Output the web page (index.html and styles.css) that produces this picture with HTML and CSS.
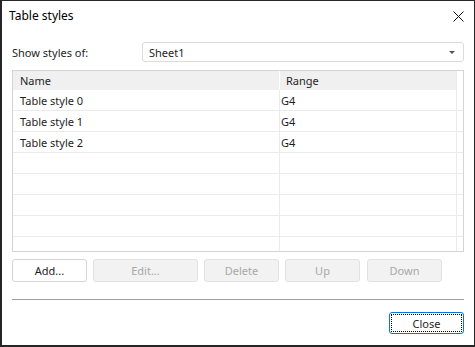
FILE: index.html
```html
<!DOCTYPE html>
<html lang="en">
  <head>
    <meta charset="UTF-8" />
    <title>Table styles</title>
    <link rel="stylesheet" href="styles.css">
  </head>
  <body>
    <div class="dialog">
      <div class="titlebar">
        <span class="title">Table styles</span>
        <svg class="close-x" width="11" height="11" viewBox="0 0 11 11">
          <path d="M0.5 0.5 L10.5 10.5 M10.5 0.5 L0.5 10.5" stroke="#111" stroke-width="1" fill="none" />
        </svg>
      </div>

      <div class="content">
        <div class="show-row">
          <span class="label">Show styles of:</span>
          <div class="combo">
            <span>Sheet1</span>
            <svg width="6" height="3" viewBox="0 0 6 3"><path d="M0 0 H6 L3 3 Z" fill="#555" /></svg>
          </div>
        </div>

        <div class="list">
          <div class="row head">
            <div class="cell name">Name</div>
            <div class="cell range">Range</div>
            <div class="cell rest"></div>
          </div>
          <div class="row">
            <div class="cell name">Table style 0</div>
            <div class="cell range">G4</div>
            <div class="cell rest"></div>
          </div>
          <div class="row">
            <div class="cell name">Table style 1</div>
            <div class="cell range">G4</div>
            <div class="cell rest"></div>
          </div>
          <div class="row">
            <div class="cell name">Table style 2</div>
            <div class="cell range">G4</div>
            <div class="cell rest"></div>
          </div>
          <div class="row"><div class="cell name"></div><div class="cell range"></div><div class="cell rest"></div></div>
          <div class="row"><div class="cell name"></div><div class="cell range"></div><div class="cell rest"></div></div>
          <div class="row"><div class="cell name"></div><div class="cell range"></div><div class="cell rest"></div></div>
          <div class="row"><div class="cell name"></div><div class="cell range"></div><div class="cell rest"></div></div>
          <div class="row last"><div class="cell name"></div><div class="cell range"></div><div class="cell rest"></div></div>
        </div>

        <div class="buttons">
          <button class="btn">Add...</button>
          <button class="btn wide" disabled>Edit...</button>
          <button class="btn" disabled>Delete</button>
          <button class="btn" disabled>Up</button>
          <button class="btn down" disabled>Down</button>
        </div>

        <div class="separator"></div>

        <div class="footer">
          <button class="btn close-btn"><span class="focus">Close</span></button>
        </div>
      </div>
    </div>
  </body>
</html>
```

FILE: styles.css
```css
body {
  margin: 0;
  font-family: "Noto Sans", "DejaVu Sans", sans-serif;
  font-size: 11px;
  color: #1e1e1e;
  background: #fff;
}
.dialog {
  width: 475px;
  height: 347px;
  box-sizing: border-box;
  border: 1px solid #262626;
  border-left-width: 2px;
  border-bottom-width: 2px;
  background: #fff;
}
.titlebar {
  height: 29px;
  display: flex;
  align-items: center;
  justify-content: space-between;
  padding: 0 10px 0 7px;
}
.title {
  font-size: 12px;
  color: #000;
}
.close-x {
  margin-top: 1px;
}
.content {
  padding: 0 10px 0 10px;
}
.show-row {
  display: flex;
  align-items: center;
  margin-top: 12px;
}
.label {
  width: 130px;
}
.combo {
  flex: 1;
  height: 20px;
  box-sizing: border-box;
  border: 1px solid #dcdcdc;
  border-radius: 3px;
  display: flex;
  align-items: center;
  justify-content: space-between;
  padding: 0 8px 0 6px;
}
.list {
  margin-top: 8px;
  height: 182px;
  box-sizing: border-box;
  border: 1px solid #d4d4d4;
  overflow: hidden;
}
.row {
  display: flex;
  height: 21px;
  box-sizing: border-box;
  border-bottom: 1px solid #ebebeb;
}
.row.head {
  height: 19px;
  border-bottom: none;
}
.cell {
  box-sizing: border-box;
  display: flex;
  align-items: center;
}
.cell.name {
  width: 267px;
  padding-left: 7px;
  border-right: 1px solid #ebebeb;
}
.cell.range {
  width: 177px;
  padding-left: 1px;
  border-right: 1px solid #ebebeb;
}
.cell.rest {
  flex: 1;
}
.head .cell.name,
.head .cell.range {
  background: #f0f0f0;
}
.head .cell.name {
  border-right-color: #fff;
}
.head .cell.range {
  padding-left: 6px;
}
.buttons {
  display: flex;
  gap: 6px;
  margin-top: 7px;
}
.btn {
  width: 75px;
  height: 23px;
  box-sizing: border-box;
  border: 1px solid #d5d5d5;
  border-radius: 3px;
  background: #fff;
  font-family: inherit;
  font-size: 11px;
  color: #1e1e1e;
  padding: 0;
}
.btn.wide {
  width: 105px;
}
.btn.down {
  margin-left: 1px;
}
.btn:disabled {
  background: #f2f2f2;
  border-color: #e2e2e2;
  color: #a8a8a8;
}
.separator {
  margin-top: 17px;
  height: 1px;
  background: #a0a0a0;
}
.footer {
  display: flex;
  justify-content: flex-end;
  margin-top: 12px;
}
.close-btn {
  height: 22px;
  border-color: #0078d7;
  padding: 1px;
}
.focus {
  display: flex;
  align-items: center;
  justify-content: center;
  height: 100%;
  box-sizing: border-box;
  border: 1px dotted #000;
}
```
